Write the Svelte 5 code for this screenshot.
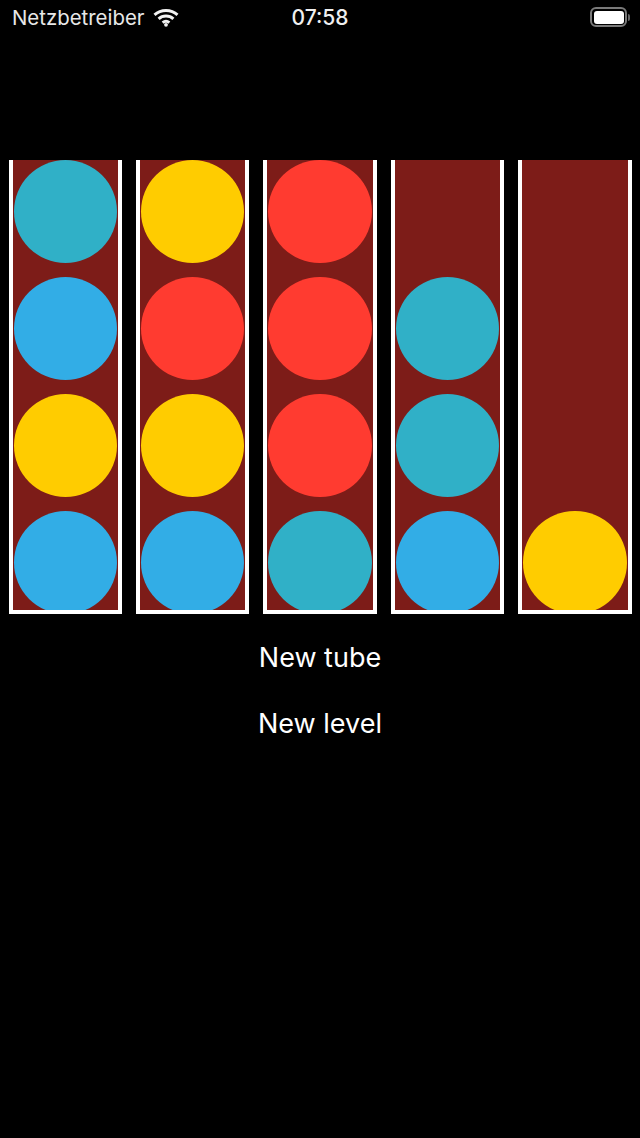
<script>
  const teal = "#30b0c7";
  const blue = "#32ade6";
  const yellow = "#ffcc00";
  const red = "#ff3b30";

  // top to bottom, null = empty slot
  const tubes = [
    [teal, blue, yellow, blue],
    [yellow, red, yellow, blue],
    [red, red, red, teal],
    [null, teal, teal, blue],
    [null, null, null, yellow]
  ];
</script>

<div class="screen">
  <header class="status">
    <div class="left">
      <span class="carrier">Netzbetreiber</span>
      <svg class="wifi" viewBox="0 0 26 19" width="26" height="19">
        <path d="M1.5 6.8C7.9 1 18.1 1 24.5 6.8" />
        <path d="M5.6 10.8C9.8 7.1 16.2 7.1 20.4 10.8" />
        <path d="M9.6 14.6C11.6 13 14.4 13 16.4 14.6" />
        <circle cx="13" cy="16.8" r="1.9" />
      </svg>
    </div>
    <span class="time">07:58</span>
    <div class="battery">
      <div class="shell"><div class="charge"></div></div>
      <div class="nub"></div>
    </div>
  </header>

  <main class="board">
    {#each tubes as tube}
      <div class="tube">
        {#each tube as ball}
          <div class="slot">
            {#if ball}
              <div class="ball" style="background: {ball}"></div>
            {/if}
          </div>
        {/each}
      </div>
    {/each}
  </main>

  <nav class="actions">
    <button>New tube</button>
    <button>New level</button>
  </nav>
</div>

<style>
  :global(body) {
    background: #000;
  }

  .screen {
    width: 640px;
    height: 1138px;
    background: #000;
    color: #fff;
    font-family: Inter, "Liberation Sans", sans-serif;
    overflow: hidden;
  }

  .status {
    height: 34px;
    padding: 0 10px;
    display: grid;
    grid-template-columns: 1fr 58px 1fr;
    align-items: center;
  }

  .left {
    display: flex;
    align-items: center;
    gap: 9px;
    padding-left: 2px;
  }

  .carrier {
    font-size: 20.4px;
    color: #e8e8e8;
  }

  .wifi {
    fill: #f2f2f2;
  }

  .wifi path {
    fill: none;
    stroke: #f2f2f2;
    stroke-width: 3;
  }

  .time {
    font-size: 21px;
    font-weight: 500;
    color: #f0f0f0;
    text-align: center;
    white-space: nowrap;
  }

  .battery {
    justify-self: end;
    display: flex;
    align-items: center;
    gap: 1px;
  }

  .shell {
    width: 37px;
    height: 20px;
    box-sizing: border-box;
    border: 2px solid #7a7a7a;
    border-radius: 6px;
    padding: 1.5px;
  }

  .charge {
    height: 100%;
    background: #fff;
    border-radius: 3px;
  }

  .nub {
    width: 2px;
    height: 7px;
    background: #666;
    border-radius: 0 2px 2px 0;
  }

  .board {
    margin-top: 125.5px;
    padding: 0 8.5px;
    display: flex;
    justify-content: space-between;
  }

  .tube {
    width: 113.5px;
    height: 454.5px;
    box-sizing: border-box;
    border: solid #fff;
    border-width: 0 4px 4px;
    background: #7d1c18;
    display: flex;
    flex-direction: column;
    align-items: center;
    gap: 13.5px;
    overflow: hidden;
  }

  .slot {
    width: 103.5px;
    height: 103.5px;
    flex: none;
  }

  .ball {
    width: 100%;
    height: 100%;
    border-radius: 50%;
  }

  .actions {
    display: flex;
    flex-direction: column;
    align-items: center;
    gap: 33px;
    margin-top: 27px;
  }

  button {
    appearance: none;
    border: 0;
    padding: 0;
    background: none;
    color: #fff;
    font: inherit;
    font-size: 27px;
    line-height: 33px;
  }
</style>
